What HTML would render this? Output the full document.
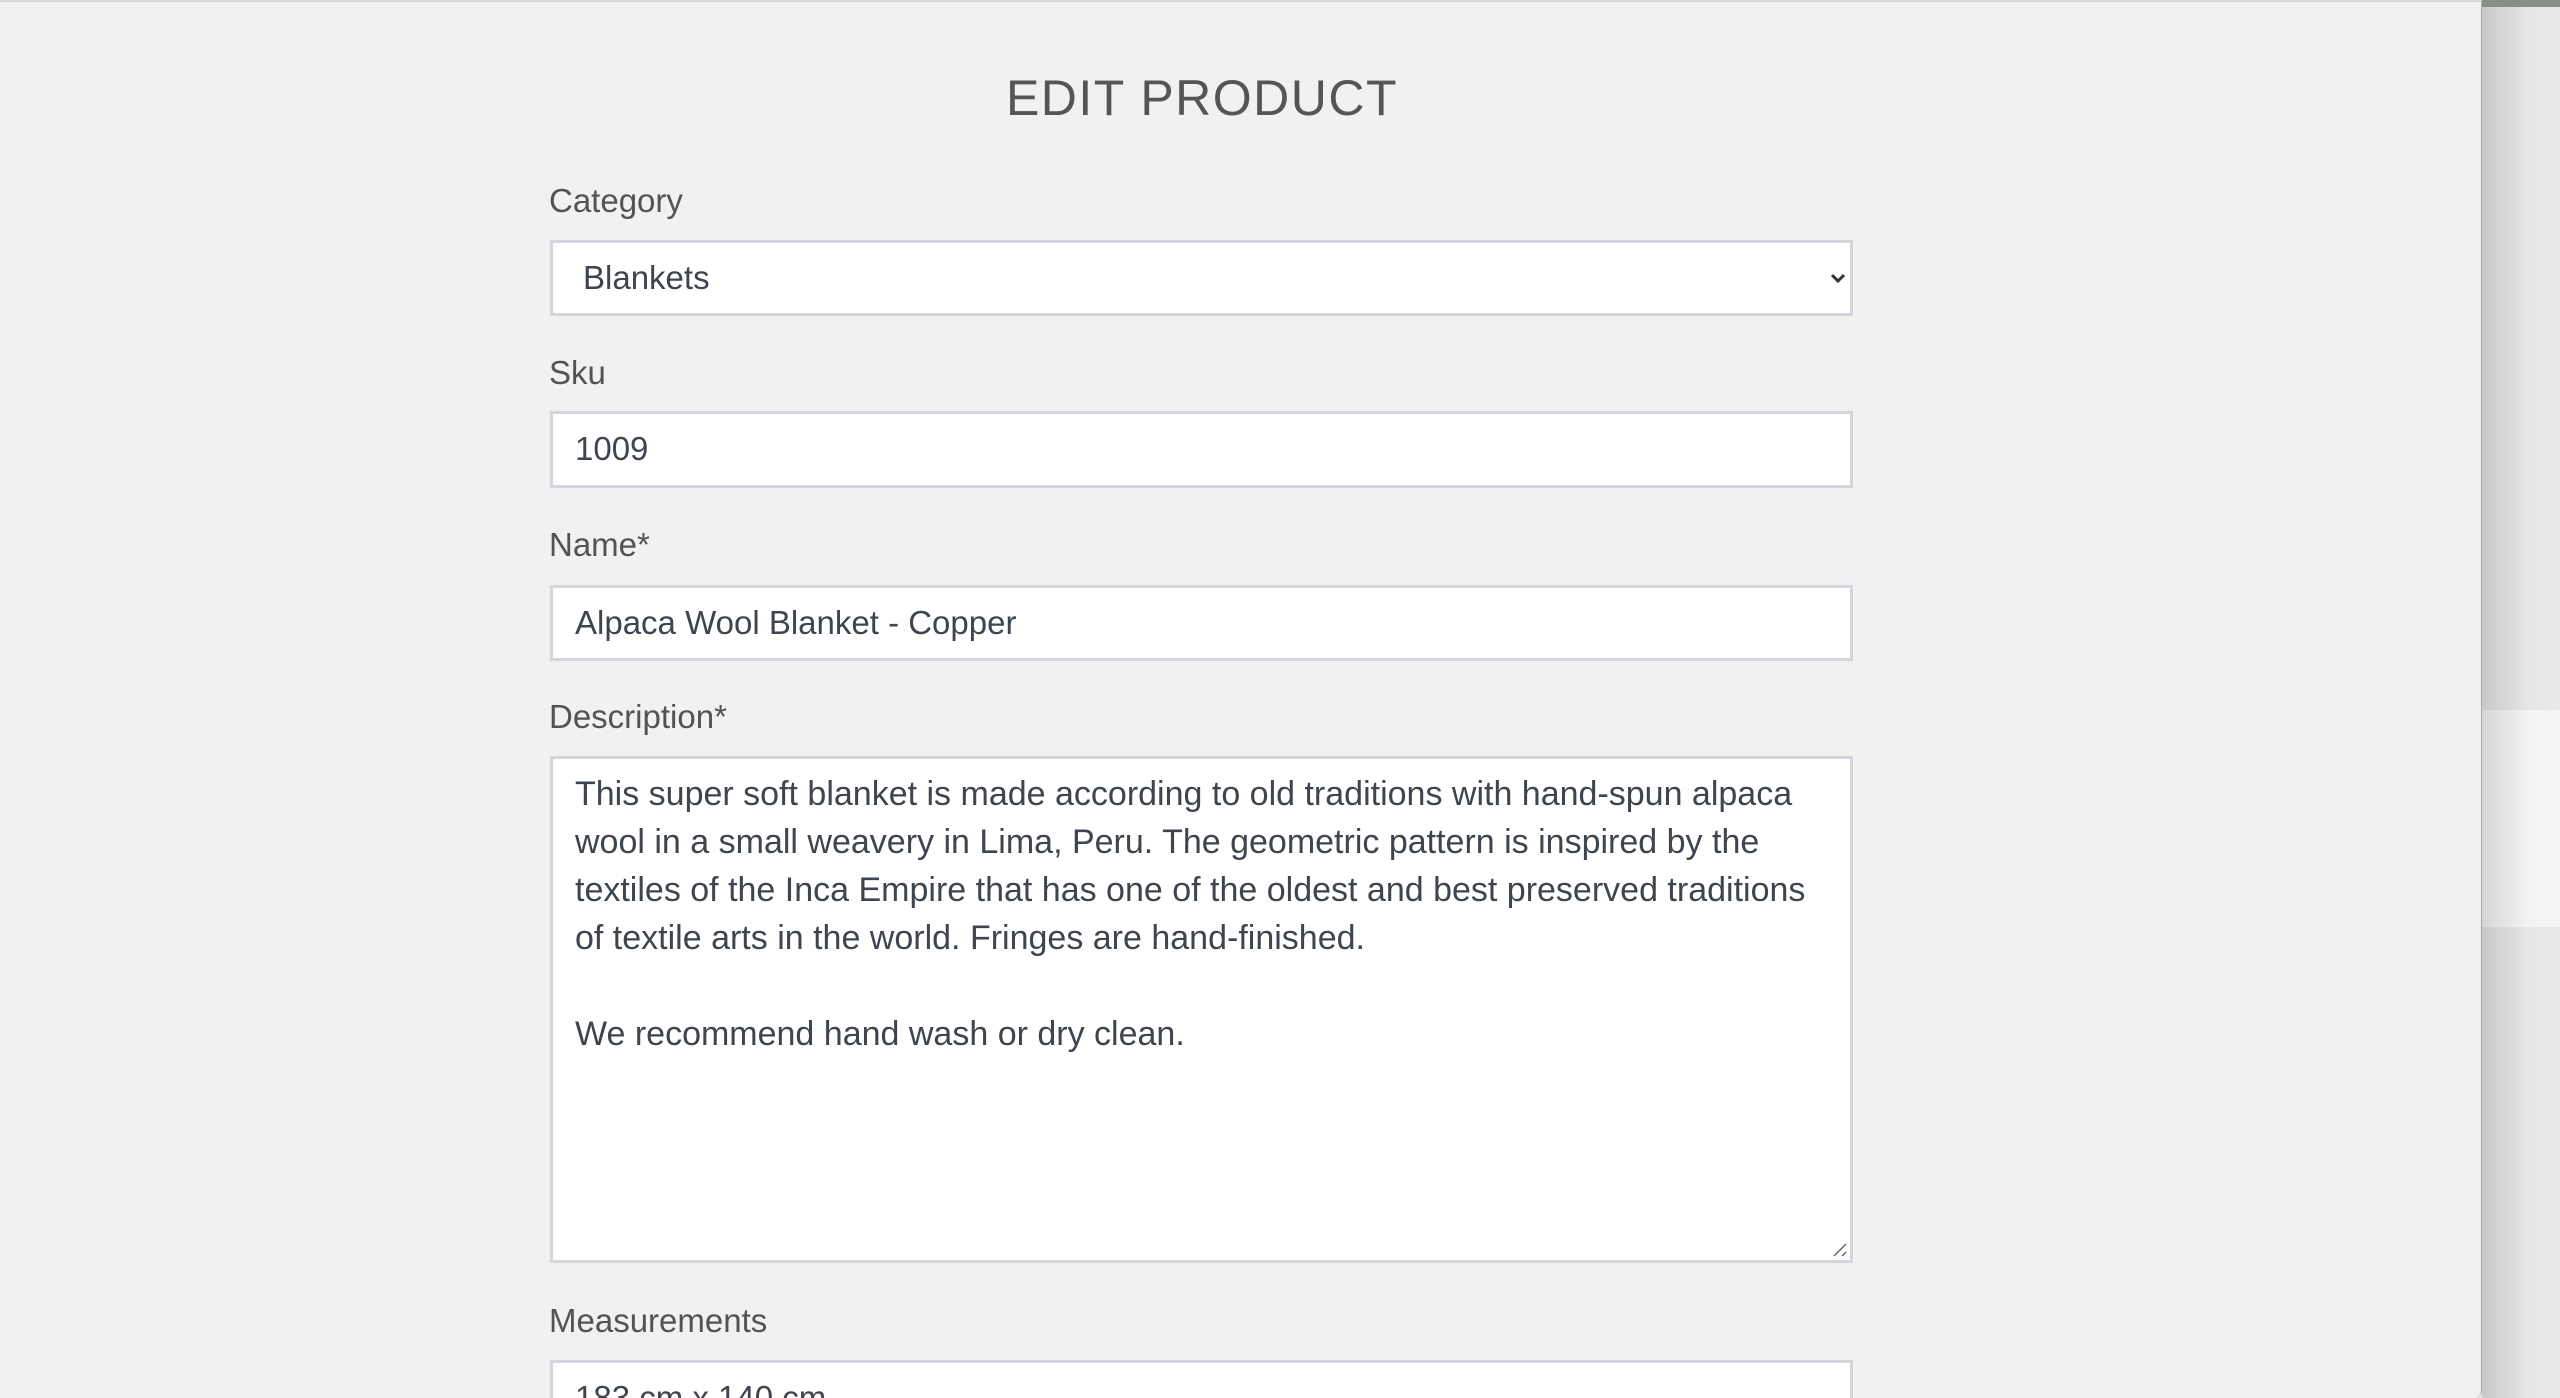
<!DOCTYPE html>
<html><head><meta charset="utf-8"><style>
html,body{margin:0;padding:0;width:2560px;height:1398px;overflow:hidden;background:#e6e6e4;font-family:"Liberation Sans",sans-serif;}
.wrap{position:relative;width:2560px;height:1398px;overflow:hidden;}
.right{position:absolute;left:2482px;top:0;width:78px;height:1398px;background:linear-gradient(90deg,#c9c9c8,#e6e6e4 60%,#e9e9e7);}
.right .top{position:absolute;left:0;top:0;width:78px;height:7px;background:#8a8e88;}
.right .band{position:absolute;left:0;top:710px;width:78px;height:217px;background:linear-gradient(90deg,#d6d6d5,#f3f3f2 60%,#f5f5f4);}
.panel{position:absolute;left:0;top:0;width:2482px;height:1398px;background:#f2f1ef;border-top:2px solid #d9d9d7;box-sizing:border-box;border-right:1px solid #a9a9a7;border-bottom-right-radius:8px;overflow:hidden;}
h1{position:absolute;left:0;width:2404px;text-align:center;top:67px;margin:0;font-size:50px;font-weight:normal;letter-spacing:1.5px;color:#555;}
.lbl{position:absolute;left:549px;font-size:33px;color:#505357;}
.box{position:absolute;left:550px;width:1303px;background:#fff;border:3px solid #d3d6dc;box-sizing:border-box;font-size:33px;color:#3e454e;}
.box span{position:absolute;left:22px;top:16px;}
.ta{white-space:pre;line-height:48px;padding:11px 0 0 22px;font-size:34px;}
</style></head><body><div class="wrap">
<div class="right"><div class="top"></div><div class="band"></div></div>
<div class="panel">
<h1>EDIT PRODUCT</h1>
<div class="lbl" style="top:180px">Category</div>
<div class="box" style="top:238px;height:76px"><span style="left:30px">Blankets</span>
<svg style="position:absolute;right:2px;top:27px" width="20" height="16" viewBox="0 0 20 16"><path d="M4 5l6 6 6-6" stroke="#333" stroke-width="3" fill="none"/></svg></div>
<div class="lbl" style="top:352px">Sku</div>
<div class="box" style="top:409px;height:77px"><span>1009</span></div>
<div class="lbl" style="top:524px">Name*</div>
<div class="box" style="top:583px;height:76px"><span>Alpaca Wool Blanket - Copper</span></div>
<div class="lbl" style="top:696px">Description*</div>
<div class="box ta" style="top:754px;height:507px">This super soft blanket is made according to old traditions with hand-spun alpaca
wool in a small weavery in Lima, Peru. The geometric pattern is inspired by the
textiles of the Inca Empire that has one of the oldest and best preserved traditions
of textile arts in the world. Fringes are hand-finished.

We recommend hand wash or dry clean.<svg style="position:absolute;right:2px;bottom:2px" width="16" height="16" viewBox="0 0 16 16"><path d="M2 14L14 2M10 14L14 10" stroke="#666" stroke-width="1.5"/></svg></div>
<div class="lbl" style="top:1300px">Measurements</div>
<div class="box" style="top:1358px;height:76px"><span>183 cm x 140 cm</span></div>
</div>
</div></body></html>
